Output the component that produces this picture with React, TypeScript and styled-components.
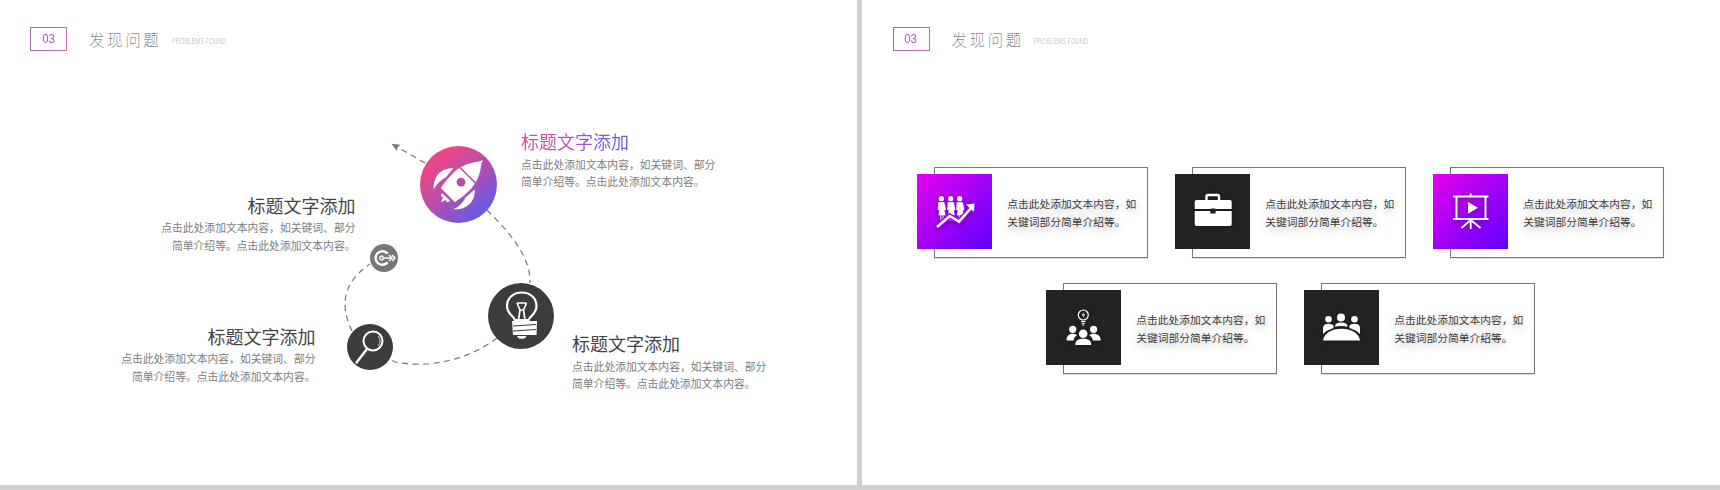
import React from 'react';
import styled, {createGlobalStyle} from 'styled-components';

const GlobalStyle = createGlobalStyle`
    html, body { margin: 0; padding: 0; background: #fff; }
    body {
        font-family: "Noto Sans CJK SC", "Liberation Sans", sans-serif;
        text-spacing-trim: space-all;
    }
`;

const Page = styled.div`
    width: 1720px;
    height: 490px;
    display: flex;
    flex-direction: column;
    overflow: hidden;
    background: #fff;
`;

const Slides = styled.div`
    flex: 1;
    display: flex;
    min-height: 0;
`;

const BottomBar = styled.div`
    height: 5px;
    background: #d0d0d0;
`;

const Divider = styled.div`
    width: 4.5px;
    background: #d0d0d0;
`;

const Slide = styled.section<{ $width: number; $inset: number }>`
    width: ${({$width}) => $width}px;
    display: flex;
    flex-direction: column;
    padding-left: ${({$inset}) => $inset}px;
    box-sizing: border-box;
`;

const Header = styled.header`
    display: flex;
    align-items: center;
    height: 24px;
    margin-top: 26.5px;
`;

const NumberBox = styled.div`
    width: 37px;
    height: 24px;
    box-sizing: border-box;
    border: 1.5px solid;
    border-image: linear-gradient(90deg, #96709f, #c46fb2) 1;
    display: flex;
    align-items: center;
    justify-content: center;
    color: #b650c0;
`;

const NumberText = styled.span`
    font-family: "Liberation Sans", sans-serif;
    font-size: 13.5px;
    line-height: 1;
    transform: scaleX(.85);
`;

const HeaderTitle = styled.h1`
    margin: 0 0 0 22px;
    font-size: 15.5px;
    font-weight: 100;
    letter-spacing: 2.6px;
    color: #585858;
    line-height: 24px;
`;

const HeaderSub = styled.span`
    display: inline-block;
    margin: 4px 0 0 10.5px;
    font-family: "Liberation Sans", sans-serif;
    font-size: 9px;
    color: #c8c8c8;
    white-space: nowrap;
    transform: scaleX(.64);
    transform-origin: left center;
`;

const Stage = styled.div`
    position: relative;
    flex: 1;
    margin-left: -30px;
`;

const Curves = styled.svg`
    position: absolute;
    left: 0;
    top: 0;
`;

const Node = styled.div<{ $x: number; $y: number; $d: number; $bg: string }>`
    position: absolute;
    left: ${({$x}) => $x}px;
    top: ${({$y}) => $y}px;
    width: ${({$d}) => $d}px;
    height: ${({$d}) => $d}px;
    border-radius: 50%;
    background: ${({$bg}) => $bg};
    svg { display: block; width: 100%; height: 100%; }
`;

const Label = styled.div<{ $x: number; $y: number; $right?: boolean }>`
    position: absolute;
    left: ${({$x}) => $x}px;
    top: ${({$y}) => $y}px;
    width: 210px;
    text-align: ${({$right}) => ($right ? 'right' : 'left')};
    white-space: nowrap;
`;

const LabelTitle = styled.div<{ $accent?: boolean }>`
    display: inline-block;
    font-size: 18px;
    line-height: 24px;
    color: #444;
    ${({$accent}) => $accent && `
        background: linear-gradient(100deg, #ea4596 0%, #b050c8 50%, #4c62ea 100%);
        -webkit-background-clip: text;
        background-clip: text;
        color: transparent;
    `}
`;

const LabelBody = styled.p`
    margin: 1.5px 0 0;
    font-size: 10.8px;
    line-height: 17.5px;
    color: #7c7c7c;
`;

const CardGrid = styled.div`
    display: flex;
    flex-direction: column;
    align-items: center;
    gap: 25.5px;
    margin-top: 116px;
    margin-left: -31px;
`;

const CardRow = styled.div`
    display: flex;
    gap: 27px;
`;

const Card = styled.article`
    display: flex;
    width: 231px;
`;

const IconBox = styled.div<{ $accent?: boolean }>`
    position: relative;
    flex: none;
    width: 75px;
    height: 75px;
    margin: 7px -58px 0 0;
    background: ${({$accent}) => ($accent ? 'linear-gradient(135deg, #e800ee, #5f00ff)' : '#232323')};
    svg {
        display: block;
        width: 75px;
        height: 75px;
        filter: drop-shadow(0 1px 2px rgba(0, 0, 0, .35));
    }
`;

const CardFrame = styled.div`
    flex: 1;
    height: 91px;
    box-sizing: border-box;
    border: 1px solid #777;
    box-shadow: 0 1px 1px rgba(0, 0, 0, .12);
    padding: 1.5px 0 0 72px;
    display: flex;
    align-items: center;
`;

const CardText = styled.p`
    margin: 0;
    font-size: 10.75px;
    line-height: 18px;
    color: #3c3c3c;
    white-space: nowrap;
    text-shadow: 0 3px 10px rgba(0, 0, 0, .3);
`;

const RocketIcon = () => (
    <svg viewBox="0 0 77 77">
        <g transform="translate(38.5 38.5) rotate(45)" fill="#fff">
            <path d="M0-34.5 C1-31 3-29 5-26 C9-20 12-12 12-3 C12 4 11 10 10 15 L-10 15 C-11 10 -12 4 -12-3 C-12-12 -9-20 -5-26 C-3-29 -1-31 0-34.5Z"/>
            <path d="M-15-8 C-23-1 -25 11 -14 21 C-16 15 -16 9 -14 4 Z"/>
            <path d="M15-8 C23-1 25 11 14 21 C16 15 16 9 14 4 Z"/>
            <path d="M-6 17.5 L6 17.5 L4 21 L2 19.5 L0 25 L-2 19.5 L-4 21 Z"/>
            <path d="M-11-13 L11-13" stroke="#b14fa8" strokeWidth="1.5"/>
            <circle cx="0" cy="-3.5" r="4.4" fill="#b84ea4"/>
        </g>
    </svg>
);

const BulbIcon = () => (
    <svg viewBox="0 0 66 66">
        <g fill="none" stroke="#fff">
            <path d="M27 37 C25 32 19 31 19 23 C19 15 25.5 9.5 33.7 9.5 C42 9.5 48.5 15 48.5 23 C48.5 31 42.5 32 40.5 37 Z" strokeWidth="2.2"/>
            <path d="M30.5 37 L32 27 L29 20 M37 37 L35.5 27 L38.5 20 M29 20 L38.5 20 M32 27 L35.5 27" strokeWidth="1.7"/>
        </g>
        <path d="M24 38 H49 L48.5 52 H25 Z" fill="#fff"/>
        <path d="M25 43 L48 41.5 M25 48 L48 46.5" stroke="#3c3c3c" strokeWidth="1.2"/>
        <path d="M29 53 H38.5 C38 55 36 55.8 33.7 55.8 C31.5 55.8 29.5 55 29 53 Z" fill="#fff"/>
    </svg>
);

const LensIcon = () => (
    <svg viewBox="0 0 46 46">
        <circle cx="26" cy="17" r="9.5" fill="none" stroke="#fff" strokeWidth="2"/>
        <path d="M31 12 A7 7 0 0 1 31 22" fill="none" stroke="#ddd" strokeWidth="1"/>
        <path d="M20 25 L9.5 38.5" stroke="#fff" strokeWidth="2.4" strokeLinecap="round"/>
    </svg>
);

const TargetIcon = () => (
    <svg viewBox="0 0 28 28">
        <g fill="none" stroke="#fff" strokeLinecap="round">
            <path d="M17 9 A6.8 6.8 0 1 0 17 19" strokeWidth="2.4"/>
            <path d="M13 12.5 A2 2 0 1 0 13 15.5" strokeWidth="1.4"/>
            <path d="M12.5 14 L21 14" strokeWidth="1.5"/>
            <path d="M19.5 11.5 L22 14 L19.5 16.5 M22.5 11.5 L25 14 L22.5 16.5" strokeWidth="1.5"/>
        </g>
    </svg>
);

const TeamGrowthIcon = () => (
    <svg viewBox="0 0 75 75">
        {[24.3, 33.7, 42.7].map(cx => (
            <g key={cx} fill="#fff">
                <circle cx={cx} cy="24.7" r="2.6"/>
                <path d={`M${cx - 3.2} 28 h6.4 l1.8 8 l-1.6 .4 l1 5 h-2 v5 h-1.3 v-5 h-.9 v5 h-1.3 v-5 h-2 l1 -5 l-1.6 -.4 z`} stroke="#a000f0" strokeWidth=".4"/>
            </g>
        ))}
        <path d="M20 53 L32.7 42 L42 47.5 L55 33" fill="none" stroke="#a400f2" strokeWidth="5.2"/>
        <path d="M20 53 L32.7 42 L42 47.5 L55 33" fill="none" stroke="#fff" strokeWidth="2.6"/>
        <path d="M49 30.5 L57.5 29.5 L57 38 Z" fill="#fff"/>
    </svg>
);

const BriefcaseIcon = () => (
    <svg viewBox="0 0 75 75">
        <path d="M31.5 27 V22.5 Q31.5 21 33 21 H42.5 Q44 21 44 22.5 V27" fill="none" stroke="#fff" strokeWidth="2.4"/>
        <path d="M21.5 26 H55 Q56.7 26 56.7 28 V35 H19.7 V28 Q19.7 26 21.5 26 Z" fill="#fff"/>
        <path d="M19.7 37 H35.5 V39.5 H40.5 V37 H56.7 V50 Q56.7 52 55 52 H21.5 Q19.7 52 19.7 50 Z" fill="#fff"/>
        <rect x="35.5" y="34.5" width="5" height="4" rx=".8" fill="#232323"/>
    </svg>
);

const ScreenIcon = () => (
    <svg viewBox="0 0 75 75">
        <g fill="none" stroke="#fff">
            <path d="M20 22.5 H55.5 M20 45 H55.5" strokeWidth="1.8"/>
            <path d="M23.5 22.5 V45 M52.5 22.5 V45" strokeWidth="2"/>
            <path d="M37.7 19.5 V22.5 M37.7 45 V55 M37.7 46 L28.5 54 M37.7 46 L47.5 54" strokeWidth="1.8"/>
        </g>
        <path d="M35 28 L45 33.7 L35 39.7 Z" fill="#fff"/>
    </svg>
);

const IdeaTeamIcon = () => (
    <svg viewBox="0 0 75 75">
        <circle cx="37.3" cy="25" r="5" fill="none" stroke="#fff" strokeWidth="1.2"/>
        <path d="M38 21.8 L35.6 25.4 H37.6 L36.8 28.2 L39.2 24.6 H37.2 Z" fill="#fff"/>
        <path d="M35 31.5 H39.6 M35.5 33.3 H39 M36.2 35 H38.3" stroke="#fff" strokeWidth="1"/>
        <g fill="#fff">
            <circle cx="26.7" cy="39.3" r="3.6"/>
            <circle cx="47.6" cy="39.3" r="3.6"/>
            <path d="M20.5 50.5 C20.5 46 23 43.7 26.7 43.7 C28.5 43.7 30 44.2 31 45.2 C29 46.5 27.8 48.2 27.5 50.5 Z"/>
            <path d="M54.7 50.5 C54.7 46 52 43.7 47.6 43.7 C45.8 43.7 44.4 44.2 43.4 45.2 C45.4 46.5 46.6 48.2 46.9 50.5 Z"/>
            <circle cx="37.2" cy="43.8" r="4.3"/>
            <path d="M29.3 55 C29.3 50 32.5 48.8 37.2 48.8 C42 48.8 45.2 50 45.2 55 Z"/>
        </g>
    </svg>
);

const MeetingIcon = () => (
    <svg viewBox="0 0 75 75">
        <g fill="#fff">
            <circle cx="24.5" cy="29.3" r="3.3"/>
            <circle cx="37" cy="27.5" r="4"/>
            <circle cx="50.5" cy="29.3" r="3.3"/>
            <path d="M19 44 V38 Q19 33.7 24.5 33.7 Q28 33.7 29.5 35.3 L29.5 38 Q23 40 19 44 Z"/>
            <path d="M31 36.7 Q31 32.5 37 32.5 Q43.5 32.5 43.5 36.7 Q37 35.5 31 36.7 Z"/>
            <path d="M56 44 V38 Q56 33.7 50.5 33.7 Q47 33.7 45.5 35.3 L45.5 38 Q52 40 56 44 Z"/>
            <path d="M19 50.5 C20 43 28 38.8 37.5 38.8 C47 38.8 55 43 56 50.5 Z"/>
        </g>
    </svg>
);

const nodes = [
    {x: 419.5, y: 95.5, d: 77, bg: 'linear-gradient(140deg, #ff4478 8%, #ac4fb4 55%, #4a60fa 95%)', icon: <RocketIcon/>},
    {x: 488, y: 232, d: 66, bg: '#3c3c3c', icon: <BulbIcon/>},
    {x: 347, y: 273, d: 46, bg: '#3c3c3c', icon: <LensIcon/>},
    {x: 369.5, y: 193, d: 28, bg: '#777', icon: <TargetIcon/>},
];

const bodyLines = ['点击此处添加文本内容，如关键词、部分', '简单介绍等。点击此处添加文本内容。'];

const labels = [
    {x: 521, y: 78.5, accent: true},
    {x: 145.5, y: 142, right: true},
    {x: 105.5, y: 273, right: true},
    {x: 572, y: 280.5},
];

const cardRows = [
    [
        {accent: true, icon: <TeamGrowthIcon/>},
        {accent: false, icon: <BriefcaseIcon/>},
        {accent: true, icon: <ScreenIcon/>},
    ],
    [
        {accent: false, icon: <IdeaTeamIcon/>},
        {accent: false, icon: <MeetingIcon/>},
    ],
];

const SlideHeader = () => (
    <Header>
        <NumberBox><NumberText>03</NumberText></NumberBox>
        <HeaderTitle>发现问题</HeaderTitle>
        <HeaderSub>PROBLEMS FOUND</HeaderSub>
    </Header>
);

export default function App() {
    return (
        <Page>
            <GlobalStyle/>
            <Slides>
                <Slide $width={857} $inset={30}>
                    <SlideHeader/>
                    <Stage>
                        <Curves width="857" height="435" viewBox="0 0 857 435">
                            <g fill="none" stroke="#777" strokeWidth="1.2">
                                <path d="M425 112 L398 96.5" strokeDasharray="6 4.5"/>
                                <path d="M487 159 C508 180 531 205 530 232" strokeDasharray="6 4.5"/>
                                <path d="M497 287 C470 308 430 318 395 311 L389 308" strokeDasharray="6 4.5"/>
                                <path d="M352 280 C340 255 342 232 370 213" strokeDasharray="6 4.5"/>
                            </g>
                            <path d="M391.5 92.7 L400.2 93.7 L397.6 96.4 L396.6 99.7 Z" fill="#777"/>
                        </Curves>
                        {nodes.map(n => (
                            <Node key={n.x} $x={n.x} $y={n.y} $d={n.d} $bg={n.bg}>{n.icon}</Node>
                        ))}
                        {labels.map(l => (
                            <Label key={l.x} $x={l.x} $y={l.y} $right={l.right}>
                                <LabelTitle $accent={l.accent}>标题文字添加</LabelTitle>
                                <LabelBody>{bodyLines[0]}<br/>{bodyLines[1]}</LabelBody>
                            </Label>
                        ))}
                    </Stage>
                </Slide>
                <Divider/>
                <Slide $width={858.5} $inset={31}>
                    <SlideHeader/>
                    <CardGrid>
                        {cardRows.map((row, i) => (
                            <CardRow key={i}>
                                {row.map((c, j) => (
                                    <Card key={j}>
                                        <IconBox $accent={c.accent}>{c.icon}</IconBox>
                                        <CardFrame>
                                            <CardText>点击此处添加文本内容，如<br/>关键词部分简单介绍等。</CardText>
                                        </CardFrame>
                                    </Card>
                                ))}
                            </CardRow>
                        ))}
                    </CardGrid>
                </Slide>
            </Slides>
            <BottomBar/>
        </Page>
    );
}
